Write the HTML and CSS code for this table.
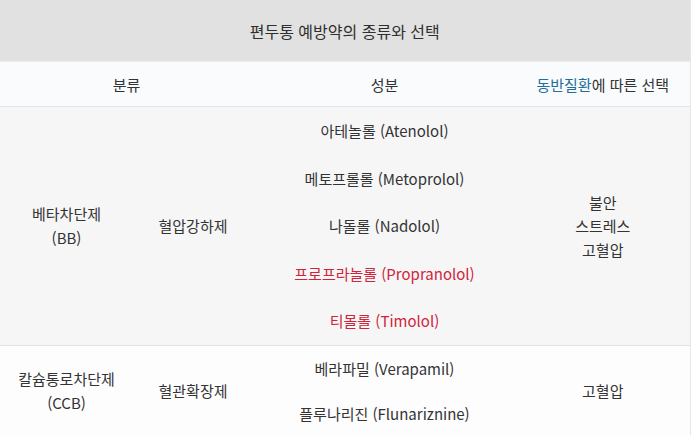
FILE: index.html
```html
<!DOCTYPE html>
<html lang="ko">
<head>
<meta charset="utf-8">
<link rel="stylesheet" href="styles.css">
</head>
<body>
<table class="drug-table">
  <colgroup>
    <col class="w1">
    <col class="w2">
    <col class="w3">
    <col class="w4">
  </colgroup>
  <thead>
    <tr class="title-row">
      <th colspan="4">편두통 예방약의 종류와 선택</th>
    </tr>
    <tr class="head-row">
      <th colspan="2">분류</th>
      <th>성분</th>
      <th><span class="hl">동반질환</span>에 따른 선택</th>
    </tr>
  </thead>
  <tbody>
    <tr class="row-bb">
      <td class="c1">베타차단제<br>(BB)</td>
      <td class="c2">혈압강하제</td>
      <td class="c3">
        <div class="item">아테놀롤 (Atenolol)</div>
        <div class="item">메토프롤롤 (Metoprolol)</div>
        <div class="item">나돌롤 (Nadolol)</div>
        <div class="item red">프로프라놀롤 (Propranolol)</div>
        <div class="item red">티몰롤 (Timolol)</div>
      </td>
      <td class="c4">불안<br>스트레스<br>고혈압</td>
    </tr>
    <tr class="row-ccb">
      <td class="c1">칼슘통로차단제<br>(CCB)</td>
      <td class="c2">혈관확장제</td>
      <td class="c3 tight">
        <div class="item">베라파밀 (Verapamil)</div>
        <div class="item">플루나리진 (Flunariznine)</div>
      </td>
      <td class="c4">고혈압</td>
    </tr>
  </tbody>
</table>
</body>
</html>
```

FILE: styles.css
```css
html, body {
  margin: 0;
  padding: 0;
  background: #ffffff;
}

body {
  font-family: "Noto Sans CJK KR", "Noto Sans", sans-serif;
  font-size: 15px;
  color: #333333;
}

.drug-table {
  width: 690px;
  border-collapse: collapse;
  border-right: 1px solid #e6e6e6;
  table-layout: fixed;
}

.w1 { width: 133px; }
.w2 { width: 120px; }
.w3 { width: 263px; }
.w4 { width: 174px; }

.drug-table th,
.drug-table td {
  padding: 0;
  text-align: center;
  vertical-align: middle;
  font-weight: normal;
}

.title-row th {
  height: 61px;
  background: #e1e1e1;
  border-bottom: 1px solid #ececec;
  font-size: 16px;
  color: #2f2f2f;
}

.head-row th {
  height: 44px;
  background: #fafbfc;
  border-bottom: 1px solid #e3e3e3;
  color: #333333;
}

.hl {
  color: #1f6e9c;
}

.row-bb td {
  background: #f6f6f7;
  border-bottom: 1px solid #e3e3e3;
}

.row-ccb td {
  background: #fdfdfe;
}

.c1 {
  line-height: 24px;
}

.c4 {
  line-height: 23.5px;
}

.item {
  line-height: 47.6px;
}

.tight .item {
  line-height: 45px;
}

.item.red {
  color: #d1233a;
}
```
